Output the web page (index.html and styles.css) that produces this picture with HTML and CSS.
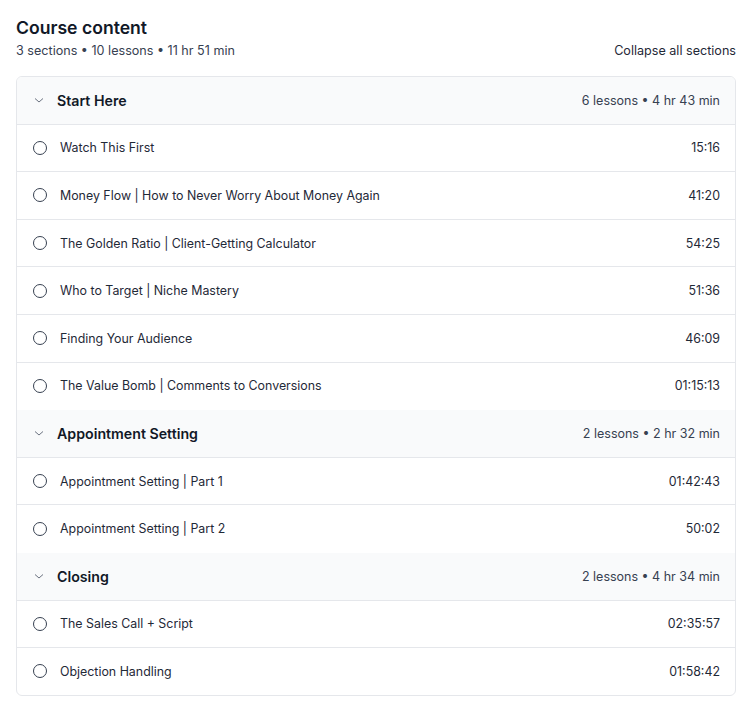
FILE: index.html
```html
<!DOCTYPE html>
<html>
<head>
<meta charset="utf-8">
<link rel="stylesheet" href="styles.css">
</head>
<body>
<div class="page">
  <h1 class="title">Course content</h1>
  <div class="meta-row">
    <span class="meta">3 sections • 10 lessons • 11 hr 51 min</span>
    <span class="collapse">Collapse all sections</span>
  </div>
  <div class="box">
    <div class="section-head">
      <svg class="chev" viewBox="0 0 10 10"><path d="M1 3.5 L5 7 L9 3.5" /></svg>
      <span class="sec-title">Start Here</span>
      <span class="sec-meta">6 lessons • 4 hr 43 min</span>
    </div>
    <div class="lesson"><span class="circle"></span><span class="l-title">Watch This First</span><span class="dur">15:16</span></div>
    <div class="lesson"><span class="circle"></span><span class="l-title">Money Flow | How to Never Worry About Money Again</span><span class="dur">41:20</span></div>
    <div class="lesson"><span class="circle"></span><span class="l-title">The Golden Ratio | Client-Getting Calculator</span><span class="dur">54:25</span></div>
    <div class="lesson"><span class="circle"></span><span class="l-title">Who to Target | Niche Mastery</span><span class="dur">51:36</span></div>
    <div class="lesson"><span class="circle"></span><span class="l-title">Finding Your Audience</span><span class="dur">46:09</span></div>
    <div class="lesson last"><span class="circle"></span><span class="l-title">The Value Bomb | Comments to Conversions</span><span class="dur">01:15:13</span></div>

    <div class="section-head">
      <svg class="chev" viewBox="0 0 10 10"><path d="M1 3.5 L5 7 L9 3.5" /></svg>
      <span class="sec-title">Appointment Setting</span>
      <span class="sec-meta">2 lessons • 2 hr 32 min</span>
    </div>
    <div class="lesson"><span class="circle"></span><span class="l-title">Appointment Setting | Part 1</span><span class="dur">01:42:43</span></div>
    <div class="lesson last"><span class="circle"></span><span class="l-title">Appointment Setting | Part 2</span><span class="dur">50:02</span></div>

    <div class="section-head">
      <svg class="chev" viewBox="0 0 10 10"><path d="M1 3.5 L5 7 L9 3.5" /></svg>
      <span class="sec-title">Closing</span>
      <span class="sec-meta">2 lessons • 4 hr 34 min</span>
    </div>
    <div class="lesson"><span class="circle"></span><span class="l-title">The Sales Call + Script</span><span class="dur">02:35:57</span></div>
    <div class="lesson last end"><span class="circle"></span><span class="l-title">Objection Handling</span><span class="dur">01:58:42</span></div>
  </div>
</div>
</body>
</html>
```

FILE: styles.css
```css
* { box-sizing: border-box; }
html, body { margin: 0; padding: 0; background: #fff; }
body {
  font-family: Inter, "Noto Sans", "Liberation Sans", sans-serif;
  color: #1f2937;
}
.page { padding: 14px 17px 0 16px; }
.title {
  margin: 0;
  font-size: 17.6px;
  line-height: 28px;
  font-weight: 600;
  color: #111827;
}
.meta-row {
  display: flex;
  justify-content: space-between;
  align-items: center;
  font-size: 12.6px;
  line-height: 16px;
  margin-top: 1px;
  color: #374151;
}
.collapse { color: #1f2937; }
.box {
  margin-top: 17px;
  border: 1px solid #e5e7eb;
  border-radius: 6px;
  overflow: hidden;
}
.section-head {
  display: flex;
  align-items: center;
  height: 47.6px;
  padding: 0 15px 0 17px;
  background: #f9fafb;
  border-bottom: 1px solid #e5e7eb;
}
.chev {
  width: 10px;
  height: 10px;
  fill: none;
  stroke: #6b7280;
  stroke-width: 1;
  margin-left: 0;
  margin-right: 13px;
}
.sec-title {
  font-size: 14.2px;
  font-weight: 600;
  color: #111827;
  flex: 1;
}
.sec-meta { font-size: 12.5px; color: #374151; }
.lesson {
  display: flex;
  align-items: center;
  height: 47.6px;
  padding: 0 15px 0 16px;
  border-bottom: 1px solid #e5e7eb;
  font-size: 12.4px;
  color: #1f2937;
}
.lesson.last { border-bottom: 1px solid transparent; }
.lesson.end { border-bottom: none; height: 46.6px; }
.circle {
  width: 14px;
  height: 14px;
  border: 1.5px solid #374151;
  border-radius: 50%;
  margin-right: 13px;
  flex: none;
}
.l-title { flex: 1; }
.dur { color: #1f2937; }
```
